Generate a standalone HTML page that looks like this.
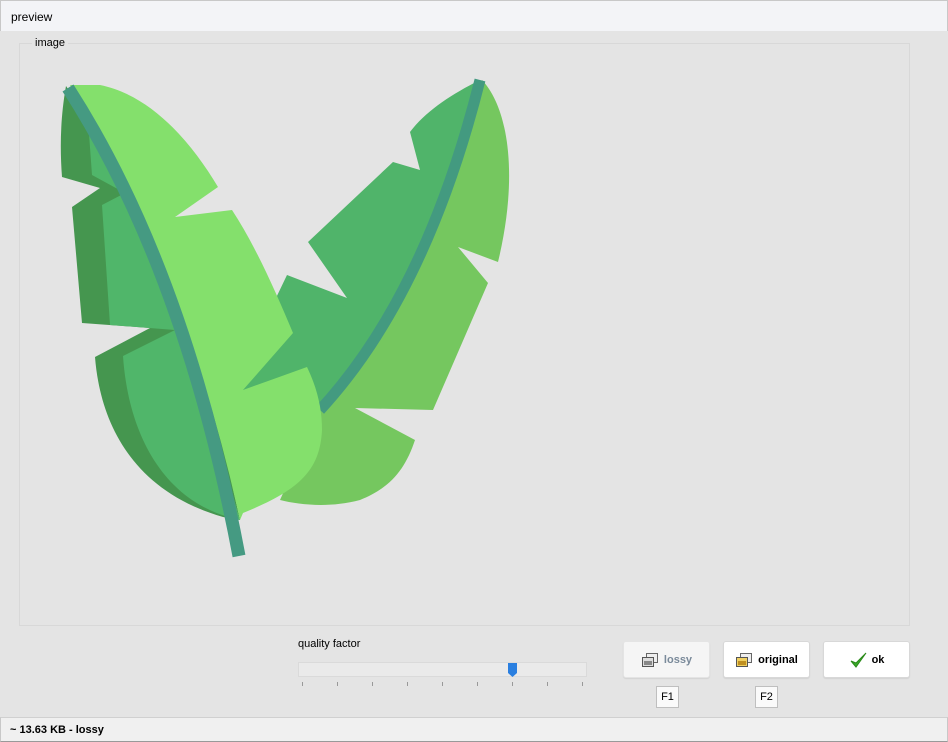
<!DOCTYPE html>
<html><head><style>
*{margin:0;padding:0;box-sizing:border-box}
body{width:948px;height:742px;background:#e4e4e4;font-family:"Liberation Sans",sans-serif;font-size:12px;color:#000;position:relative;overflow:hidden}
.abs{position:absolute}
.title{left:0;top:0;width:948px;height:31px;background:#f3f4f7;border:1px solid #c8c8c8;border-bottom:none}
.title span{position:absolute;left:10px;top:9px;font-size:12px}
.grp{left:19px;top:43px;width:891px;height:583px;border:1px solid #d8d8d8}
.btn{height:37px;width:87px;background:#fff;border:1px solid #d8d8d8;border-radius:3px;display:flex;align-items:center;justify-content:center;font-weight:bold;font-size:11px;top:641px;box-shadow:0 1px 1px rgba(0,0,0,0.08)}
.fk{width:23px;height:22px;background:#fafafa;border:1px solid #bfbfbf;top:686px;font-size:11px;display:flex;align-items:center;justify-content:center}
.status{left:0;top:717px;width:948px;height:25px;background:#f0f0f0;border-top:1px solid #d0d0d0;border-left:1px solid #c8c8c8;border-right:1px solid #c8c8c8;border-bottom:1px solid #999}
</style></head><body>
<div class="abs title"><span>preview</span></div>
<div class="abs grp"></div>
<div class="abs" style="left:32px;top:37px;padding:0 3px;background:#e4e4e4;font-size:11px">image</div>
<svg class="abs" style="left:0;top:0" width="948" height="742">
<!-- right leaf -->
<path d="M480,80 C450,95 425,112 410,132 L420,170 L393,162 L308,242 L347,298 L287,275 L275,300 L242,392 L320,410 Q426,295 480,80 Z" fill="#50b46a"/>
<path d="M482,80 C510,110 518,180 498,262 L458,247 L488,283 L433,410 L355,408 L415,440 C405,470 390,488 360,500 C330,508 300,505 280,500 L320,410 Q426,295 482,80 Z" fill="#75c75f"/>
<path d="M480,80 Q426,295 320,410" stroke="#439a80" stroke-width="11" fill="none"/>
<!-- left leaf -->
<path d="M66,86 C60,120 60,150 62,177 L100,188 L72,207 L82,323 L150,328 L95,357 C100,420 130,490 223,517 L240,520 L180,250 Z" fill="#45964f"/>
<path d="M88,120 L92,175 L125,193 L102,205 L110,325 L175,330 L123,356 C128,430 160,495 225,516 L240,520 L165,260 Z" fill="#50b66a"/>
<path d="M70,85 L100,85 C150,95 190,140 218,187 L175,217 L232,210 C255,245 275,290 293,333 L243,390 L307,367 C318,390 322,410 322,430 C320,470 300,490 243,513 L240,520 Q185,270 70,85 Z" fill="#84e06c"/>
<path d="M68,88 Q185,270 239,556" stroke="#459a82" stroke-width="13" fill="none"/>
<!-- slider -->
<rect x="298.5" y="662.5" width="288" height="14" fill="#eaeaea" stroke="#dadada"/>
<path d="M508,663 h9 v10 l-4.5,4 l-4.5,-4 z" fill="#2a7fe0"/>
<g stroke="#999" stroke-width="1">
<line x1="302.5" y1="682" x2="302.5" y2="686"/><line x1="337.5" y1="682" x2="337.5" y2="686"/><line x1="372.5" y1="682" x2="372.5" y2="686"/><line x1="407.5" y1="682" x2="407.5" y2="686"/><line x1="442.5" y1="682" x2="442.5" y2="686"/><line x1="477.5" y1="682" x2="477.5" y2="686"/><line x1="512.5" y1="682" x2="512.5" y2="686"/><line x1="547.5" y1="682" x2="547.5" y2="686"/><line x1="582.5" y1="682" x2="582.5" y2="686"/>
</g>
</svg>
<div class="abs" style="left:298px;top:638px;font-size:11px">quality factor</div>
<div class="abs btn" style="left:623px;background:#f5f5f5;border-color:#e4e4e4;color:#7a8a9a">
<svg width="18" height="16" style="margin-right:5px"><rect x="5.5" y="1.5" width="11" height="9" fill="#eee" stroke="#666"/><rect x="1.5" y="5.5" width="11" height="9" fill="#ddd" stroke="#555"/><rect x="3" y="9" width="8" height="4" fill="#888"/></svg>lossy</div>
<div class="abs btn" style="left:723px">
<svg width="18" height="16" style="margin-right:5px"><rect x="5.5" y="1.5" width="11" height="9" fill="#eee" stroke="#666"/><rect x="1.5" y="5.5" width="11" height="9" fill="#f0d060" stroke="#555"/><rect x="3" y="9" width="8" height="4" fill="#c09020"/></svg>original</div>
<div class="abs btn" style="left:823px">
<svg width="18" height="18" style="margin-right:5px"><path d="M2,10 L7,16 L17,2 L7,12 Z" fill="#3aaa2a" stroke="#2a8a1a" stroke-width="1"/></svg>ok</div>
<div class="abs fk" style="left:656px">F1</div>
<div class="abs fk" style="left:755px">F2</div>
<div class="abs status"><span style="position:absolute;left:9px;top:6px;font-weight:bold;font-size:11px">~ 13.63 KB - lossy</span></div>
</body></html>
